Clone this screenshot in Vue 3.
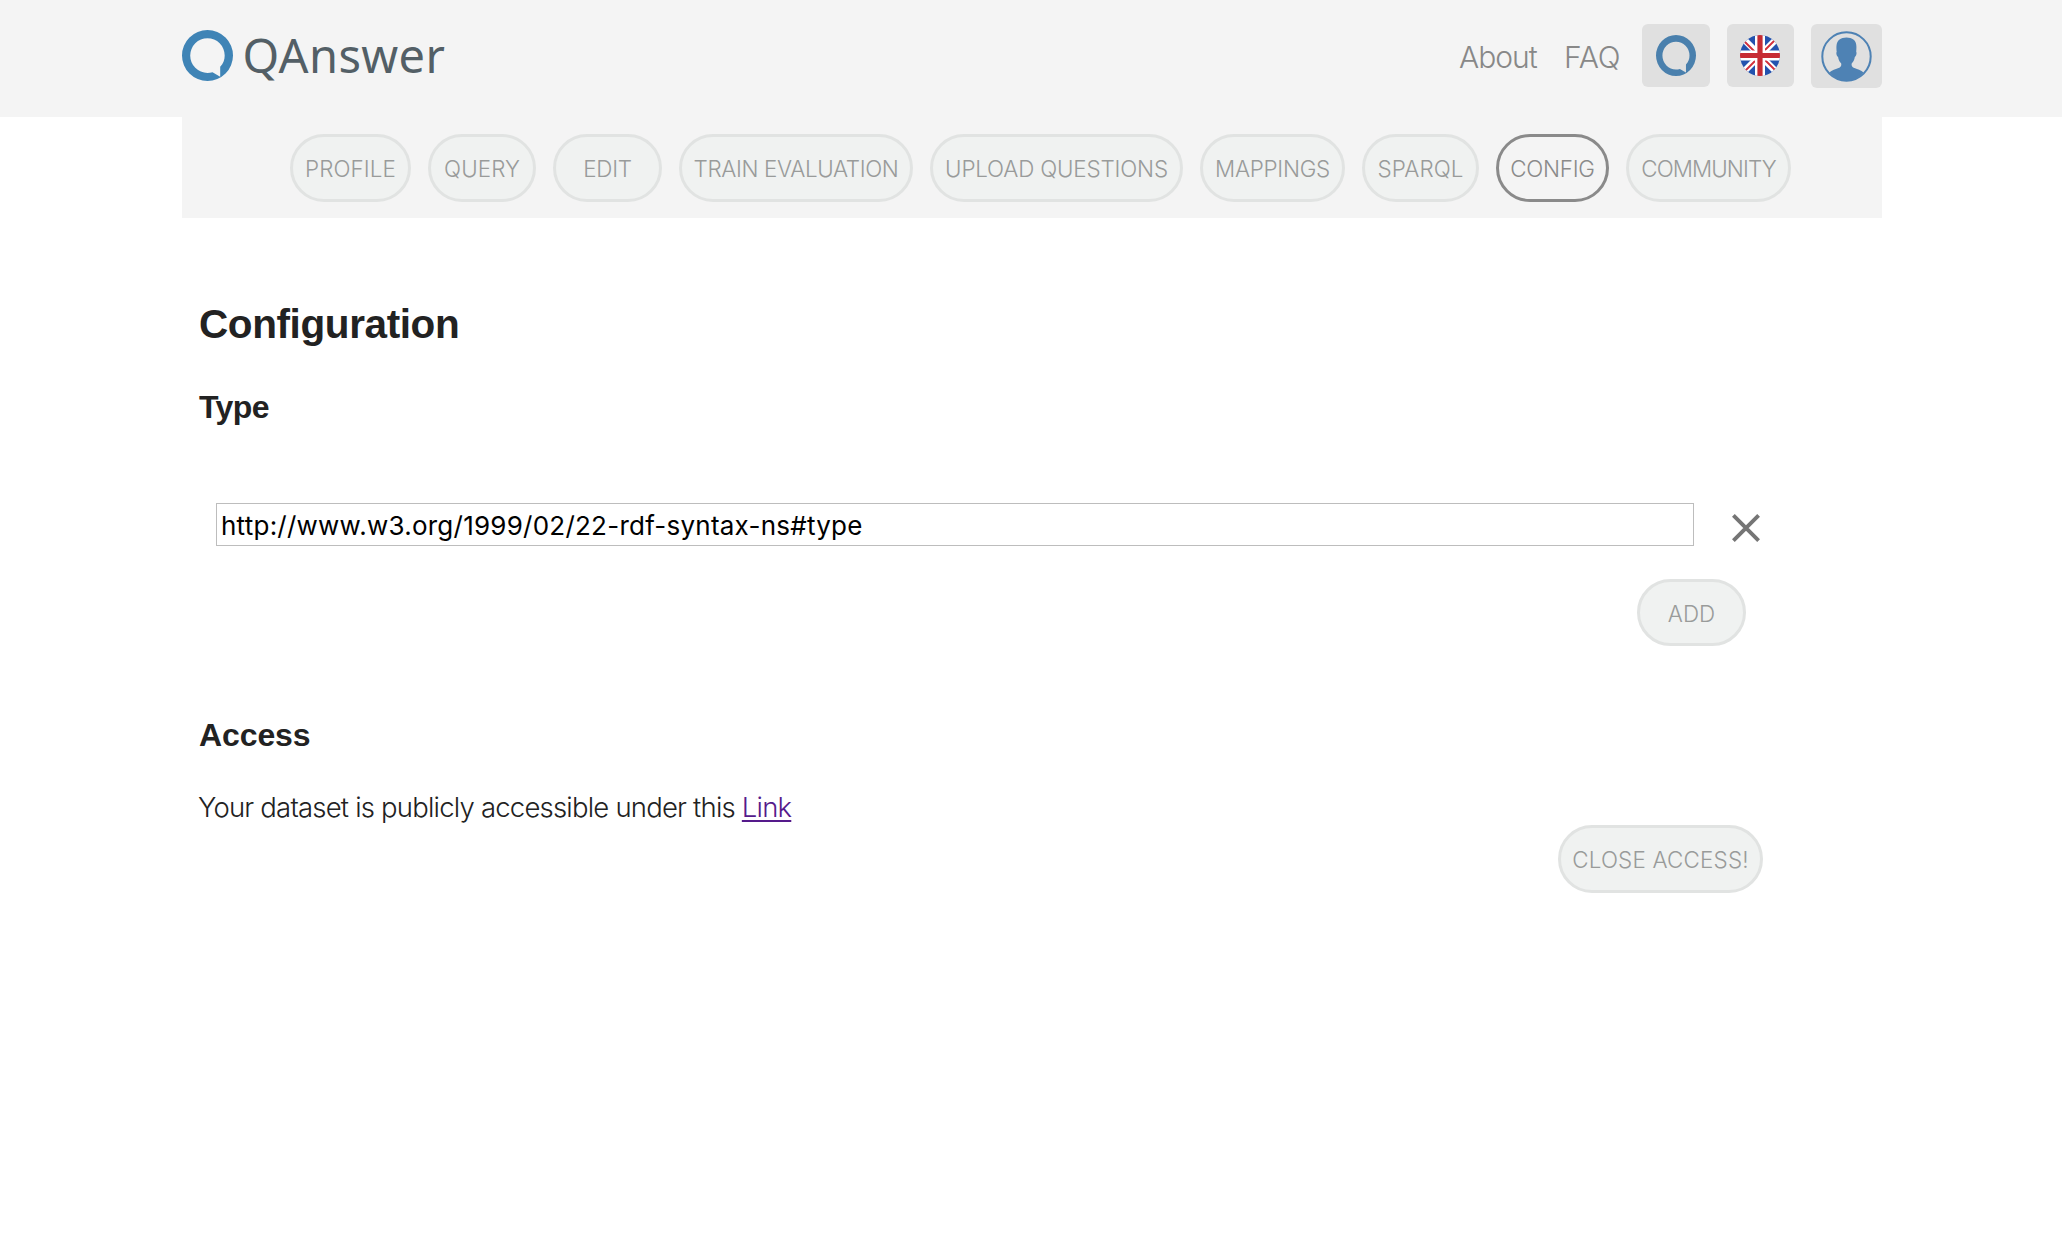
<script setup>
const tabs = [
  { label: 'PROFILE', width: 121, spacing: 0.1 },
  { label: 'QUERY', width: 108, spacing: 0.1 },
  { label: 'EDIT', width: 109, spacing: -0.2 },
  { label: 'TRAIN EVALUATION', width: 234, spacing: -0.35 },
  { label: 'UPLOAD QUESTIONS', width: 253, spacing: -0.17 },
  { label: 'MAPPINGS', width: 145, spacing: -0.25 },
  { label: 'SPARQL', width: 117, spacing: 0.1 },
  { label: 'CONFIG', width: 113, spacing: -0.25, active: true },
  { label: 'COMMUNITY', width: 165, spacing: -0.9 },
]
</script>

<template>
  <div class="page">
    <header class="top">
      <div class="brand">
        <svg class="mark" viewBox="0 0 51 51">
          <path fill="#3f84b6" fill-rule="evenodd" d="M25.5 0a25.5 25.5 0 1 0 0 51a25.5 25.5 0 1 0 0-51zM25.5 8.300a17.200 17.200 0 0 1 17.200 17.200c0 4.200-1.300 8-4.500 11.200V46.700L30.500 42.200c-1.700.600-3.300.700-5 .700a17.300 17.300 0 0 1 0-34.600z" />
        </svg>
        <span class="name">QAnswer</span>
      </div>
      <nav class="links">
        <a class="about">About</a>
        <a class="faq">FAQ</a>
        <button class="tile t1">
          <svg width="40" height="41" viewBox="0 0 51 51" preserveAspectRatio="none">
            <path fill="#4a80ad" fill-rule="evenodd" d="M25.5 0a25.5 25.5 0 1 0 0 51a25.5 25.5 0 1 0 0-51zM25.5 8.300a17.200 17.200 0 0 1 17.200 17.200c0 4.200-1.300 8-4.500 11.200V46.700L30.500 42.200c-1.700.600-3.300.700-5 .700a17.300 17.300 0 0 1 0-34.600z" />
          </svg>
        </button>
        <button class="tile t2">
          <svg width="40" height="41" viewBox="0 0 40 41">
            <defs><clipPath id="disc"><ellipse cx="20" cy="20.500" rx="20" ry="20.500" /></clipPath></defs>
            <g clip-path="url(#disc)">
              <rect width="40" height="41" fill="#2352ae" />
              <path d="M0 0.500L40 40.500M40 0.500L0 40.500" stroke="#fff" stroke-width="6.500" />
              <path d="M4 6L15 17M36 4L23 17M3 38L17 24M36 36L25 25" stroke="#d2303b" stroke-width="1.800" />
              <path d="M20 0V41M0 20.500H40" stroke="#fff" stroke-width="10" />
              <path d="M20 0V41M0 20.500H40" stroke="#c62b33" stroke-width="5.200" />
            </g>
          </svg>
        </button>
        <button class="tile t3">
          <svg width="51" height="51" viewBox="0 0 51 51">
            <circle cx="25.500" cy="25.500" r="24.200" fill="none" stroke="#4e82b4" stroke-width="2" />
            <path fill="#4e82b4" d="M8.300 41.500c2.500-2.300 6-3.400 10.500-5.100c1.500-.9 1.800-3 1.300-4.200c-1.700-1.600-2.700-4-3-6.300c-1.500-.6-2.200-4-1.400-5.200c-.5-5-.5-9.500 2.500-12c4-3 10.500-3 14.500 0c3 2.500 3 7 2.500 12c.8 1.200.1 4.600-1.400 5.200c-.3 2.300-1.300 4.700-3 6.300c-.5 1.200-.2 3.300 1.300 4.200c4.500 1.700 8 2.800 10.500 5.100c-4.600 5.300-10.800 8.300-17.100 8.300s-12.600-3-17.200-8.300z" />
          </svg>
        </button>
      </nav>
    </header>

    <div class="tabs">
      <button
        v-for="tab in tabs"
        :key="tab.label"
        class="pill"
        :class="{ active: tab.active }"
        :style="{ width: tab.width + 'px', letterSpacing: tab.spacing + 'px' }"
      >{{ tab.label }}</button>
    </div>

    <main class="content">
      <h1>Configuration</h1>
      <h2 class="type">Type</h2>
      <div class="row">
        <input type="text" value="http://www.w3.org/1999/02/22-rdf-syntax-ns#type" />
        <svg class="remove" width="28" height="28" viewBox="0 0 28 28">
          <path d="M1.400 1.400L26.600 26.600M26.600 1.400L1.400 26.600" stroke="#757575" stroke-width="3.900" />
        </svg>
      </div>
      <button class="pill add">ADD</button>
      <h2 class="access">Access</h2>
      <p>Your dataset is publicly accessible under this <a>Link</a></p>
      <button class="pill close">CLOSE ACCESS!</button>
    </main>
  </div>
</template>

<style>
body {
  margin: 0;
  background: #fff;
}
</style>

<style scoped>
.page {
  width: 2062px;
  height: 1252px;
  overflow: hidden;
  color: #222;
  font-family: Inter, "Liberation Sans", sans-serif;
  font-weight: 340;
}
button {
  box-sizing: border-box;
  margin: 0;
  padding: 0;
  font-family: inherit;
  font-weight: 340;
}
.top {
  box-sizing: border-box;
  height: 117px;
  padding: 0 180px 0 182px;
  background: #f4f4f4;
  display: flex;
  justify-content: space-between;
  align-items: flex-start;
}
.brand {
  display: flex;
  align-items: flex-start;
  padding-top: 30px;
}
.mark {
  width: 51px;
  height: 51px;
}
.name {
  margin-left: 9.500px;
  font: 400 47px/50px "Noto Sans", sans-serif;
  color: #535f66;
  letter-spacing: 0.35px;
}
.links {
  display: flex;
  align-items: flex-start;
  padding-top: 24px;
  color: #888;
  font-size: 30px;
  line-height: 66px;
}
.about {
  width: 105px;
  letter-spacing: -1px;
}
.faq {
  width: 78px;
  letter-spacing: -0.2px;
}
.tile {
  height: 63px;
  border: 0;
  border-radius: 6px;
  background: #e0e0e0;
  display: flex;
  align-items: center;
  justify-content: center;
  margin-right: 17px;
}
.t1 { width: 68px; }
.t2 {
  width: 67px;
  padding-right: 1px;
}
.t3 {
  width: 71px;
  height: 64px;
  margin-right: 0;
  padding-right: 1px;
}
.tabs {
  box-sizing: border-box;
  width: 1700px;
  height: 101px;
  margin-left: 182px;
  padding: 17px 0 0 108px;
  background: #f4f4f4;
  display: flex;
  gap: 17px;
}
.pill {
  flex: none;
  height: 68px;
  padding-top: 2px;
  border: 3px solid #e1e3e2;
  border-radius: 34px;
  background: #f0f2f1;
  color: #999b9a;
  font-size: 22.400px;
  line-height: 60px;
  white-space: nowrap;
}
.pill.active {
  border-color: #8a8a8a;
  background: #f4f4f4;
  color: #8a8a8a;
}
.content {
  display: flex;
  flex-direction: column;
  width: 1700px;
  margin-left: 182px;
}
h1, h2, p {
  margin: 0 0 0 17px;
  font-family: "Liberation Sans", sans-serif;
}
h1 {
  margin-top: 82px;
  font-size: 40.500px;
  line-height: 48px;
  letter-spacing: -0.4px;
}
h2 {
  font-size: 32px;
  line-height: 40px;
}
.type {
  margin-top: 39px;
  letter-spacing: -0.6px;
}
.row {
  display: flex;
  align-items: flex-start;
  margin: 76px 0 0 34px;
}
input {
  box-sizing: border-box;
  width: 1478px;
  height: 43px;
  margin: 0;
  padding: 2px 4px 0;
  border: 1px solid #bdbdbd;
  border-radius: 0;
  background: #fff;
  color: #000;
  font: 400 26px/39px Inter, sans-serif;
  letter-spacing: 0.24px;
}
.remove {
  margin: 11px 0 0 38px;
}
.add {
  width: 109px;
  height: 67px;
  margin: 33px 0 0 1455px;
}
.access {
  margin-top: 69px;
  letter-spacing: -0.1px;
}
p {
  margin: 32px 0 0 16px;
  font: 340 27.500px/40px Inter, sans-serif;
  letter-spacing: -0.8px;
}
p a {
  color: #551a8b;
  text-decoration: underline;
  text-decoration-thickness: 2px;
  text-underline-offset: 3px;
}
.close {
  width: 205px;
  margin: -2px 0 0 1376px;
  letter-spacing: 0.2px;
}
</style>
